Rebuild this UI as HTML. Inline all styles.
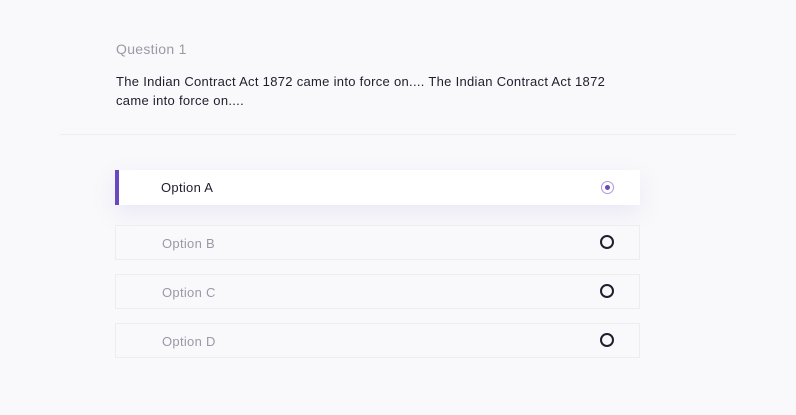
<!DOCTYPE html>
<html><head><style>
body{margin:0;width:796px;height:415px;background:#f9f9fb;font-family:"Liberation Sans",sans-serif;position:relative;overflow:hidden}
.q{position:absolute;left:116px;top:41px;font-size:14px;color:#9a9aa6;letter-spacing:0.3px}
.t{position:absolute;left:116px;top:72px;width:500px;font-size:13px;line-height:19px;color:#1e1e2e;letter-spacing:0.3px}
.hr{position:absolute;left:60px;top:134px;width:676px;height:1px;background:#eeeef2}
.o{position:absolute;left:115px;width:525px;height:35px;border:1px solid #ececf1;box-sizing:border-box;background:#f9f9fb}
.o span{position:absolute;left:46px;top:10px;font-size:13px;color:#9a9aa6;letter-spacing:0.3px}
.r{position:absolute;left:484px;top:9px;width:10px;height:10px;border:2px solid #1e1e2e;border-radius:50%}
.a{top:170px;height:35px;background:#fff;border:none;box-shadow:0 8px 24px rgba(120,110,200,0.12)}
.a:before{content:"";position:absolute;left:0;top:0;width:4px;height:35px;background:#6a48c0}
.a span{color:#1e1e2e}
.a .r{border:1px solid #a99ae0;width:11px;height:11px;left:486px;top:11px}
.a .r:after{content:"";position:absolute;left:3px;top:3px;width:5px;height:5px;border-radius:50%;background:#6a48c0}
</style></head><body>
<div class="q">Question 1</div>
<div class="t">The Indian Contract Act 1872 came into force on.... The Indian Contract Act 1872 came into force on....</div>
<div class="hr"></div>
<div class="o a"><span>Option A</span><div class="r"></div></div>
<div class="o" style="top:225px"><span>Option B</span><div class="r"></div></div>
<div class="o" style="top:274px"><span>Option C</span><div class="r"></div></div>
<div class="o" style="top:323px"><span>Option D</span><div class="r"></div></div>
</body></html>
